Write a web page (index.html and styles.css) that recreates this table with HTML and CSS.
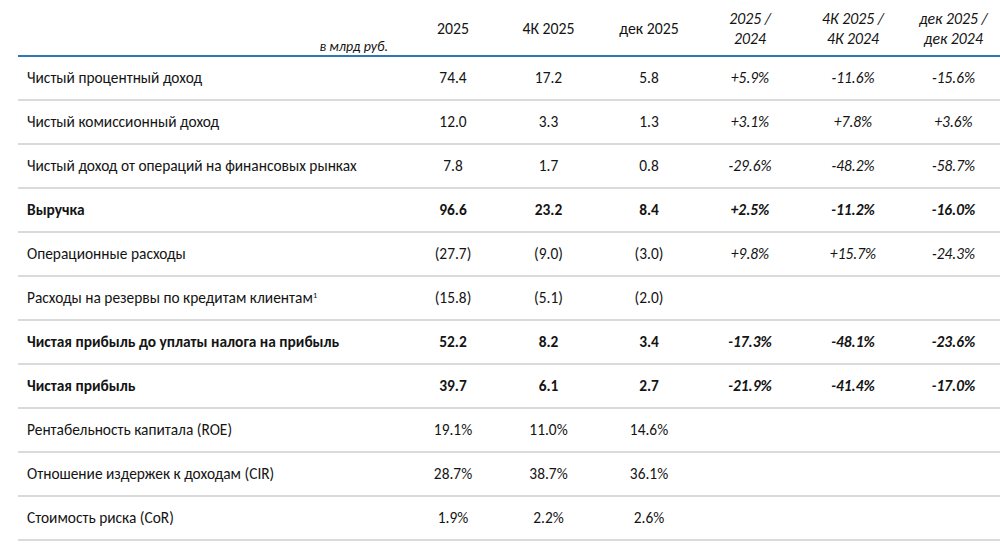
FILE: index.html
```html
<!DOCTYPE html>
<html lang="ru">
<head>
<meta charset="utf-8">
<link rel="stylesheet" href="styles.css">
</head>
<body>
<div class="page">
  <div class="row head">
    <div class="cell label unit">в млрд руб.</div>
    <div class="cell">2025</div>
    <div class="cell">4К 2025</div>
    <div class="cell">дек 2025</div>
    <div class="cell it">2025 /<br>2024</div>
    <div class="cell it">4К 2025 /<br>4К 2024</div>
    <div class="cell it">дек 2025 /<br>дек 2024</div>
  </div>
  <div class="row">
    <div class="cell label">Чистый процентный доход</div>
    <div class="cell">74.4</div><div class="cell">17.2</div><div class="cell">5.8</div>
    <div class="cell it">+5.9%</div><div class="cell it">-11.6%</div><div class="cell it">-15.6%</div>
  </div>
  <div class="row">
    <div class="cell label">Чистый комиссионный доход</div>
    <div class="cell">12.0</div><div class="cell">3.3</div><div class="cell">1.3</div>
    <div class="cell it">+3.1%</div><div class="cell it">+7.8%</div><div class="cell it">+3.6%</div>
  </div>
  <div class="row">
    <div class="cell label">Чистый доход от операций на финансовых рынках</div>
    <div class="cell">7.8</div><div class="cell">1.7</div><div class="cell">0.8</div>
    <div class="cell it">-29.6%</div><div class="cell it">-48.2%</div><div class="cell it">-58.7%</div>
  </div>
  <div class="row bold">
    <div class="cell label">Выручка</div>
    <div class="cell">96.6</div><div class="cell">23.2</div><div class="cell">8.4</div>
    <div class="cell it">+2.5%</div><div class="cell it">-11.2%</div><div class="cell it">-16.0%</div>
  </div>
  <div class="row">
    <div class="cell label">Операционные расходы</div>
    <div class="cell">(27.7)</div><div class="cell">(9.0)</div><div class="cell">(3.0)</div>
    <div class="cell it">+9.8%</div><div class="cell it">+15.7%</div><div class="cell it">-24.3%</div>
  </div>
  <div class="row">
    <div class="cell label">Расходы на резервы по кредитам клиентам<sup>1</sup></div>
    <div class="cell">(15.8)</div><div class="cell">(5.1)</div><div class="cell">(2.0)</div>
    <div class="cell it"></div><div class="cell it"></div><div class="cell it"></div>
  </div>
  <div class="row bold">
    <div class="cell label">Чистая прибыль до уплаты налога на прибыль</div>
    <div class="cell">52.2</div><div class="cell">8.2</div><div class="cell">3.4</div>
    <div class="cell it">-17.3%</div><div class="cell it">-48.1%</div><div class="cell it">-23.6%</div>
  </div>
  <div class="row bold">
    <div class="cell label">Чистая прибыль</div>
    <div class="cell">39.7</div><div class="cell">6.1</div><div class="cell">2.7</div>
    <div class="cell it">-21.9%</div><div class="cell it">-41.4%</div><div class="cell it">-17.0%</div>
  </div>
  <div class="row">
    <div class="cell label">Рентабельность капитала (ROE)</div>
    <div class="cell">19.1%</div><div class="cell">11.0%</div><div class="cell">14.6%</div>
    <div class="cell"></div><div class="cell"></div><div class="cell"></div>
  </div>
  <div class="row">
    <div class="cell label">Отношение издержек к доходам (CIR)</div>
    <div class="cell">28.7%</div><div class="cell">38.7%</div><div class="cell">36.1%</div>
    <div class="cell"></div><div class="cell"></div><div class="cell"></div>
  </div>
  <div class="row">
    <div class="cell label">Стоимость риска (CoR)</div>
    <div class="cell">1.9%</div><div class="cell">2.2%</div><div class="cell">2.6%</div>
    <div class="cell"></div><div class="cell"></div><div class="cell"></div>
  </div>
</div>
</body>
</html>
```

FILE: styles.css
```css
html, body {
  margin: 0;
  padding: 0;
  background: #ffffff;
}
body {
  font-family: Carlito, "Liberation Sans", Arial, sans-serif;
  font-size: 15.4px;
  color: #141414;
}
.page {
  padding-left: 18px;
  width: 982px;
}
.row {
  display: grid;
  grid-template-columns: 388px 94px 97px 104px 98px 108px 93px;
  height: 42px;
  border-bottom: 2px solid #dadada;
  align-items: center;
}
.row.head {
  height: 55px;
  border-bottom: 2px solid #2f78b4;
  align-items: center;
}
.cell {
  text-align: center;
  line-height: 20px;
}
.cell.label {
  text-align: left;
  padding-left: 9px;
}
.head .cell {
  padding-top: 2px;
  font-size: 15.8px;
}
.head .unit {
  text-align: right;
  padding-right: 18px;
  font-style: italic;
  font-size: 14px;
  align-self: end;
  padding-top: 0;
  padding-bottom: 0;
  line-height: 16px;
}
.it {
  font-style: italic;
}
.bold .cell {
  font-weight: bold;
}
sup {
  font-size: 9px;
  line-height: 0;
  vertical-align: 5px;
}
```
